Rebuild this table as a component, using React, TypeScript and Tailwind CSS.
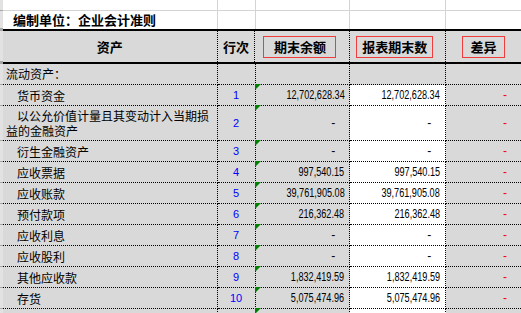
import React from 'react';

// 资产负债表 - 流动资产部分
interface AssetRow {
  label: string[];
  no: string;
  end: string;
  report: string;
}

const rows: AssetRow[] = [
  { label: ['货币资金'], no: '1', end: '12,702,628.34', report: '12,702,628.34' },
  { label: ['以公允价值计量且其变动计入当期损', '益的金融资产'], no: '2', end: '-', report: '-' },
  { label: ['衍生金融资产'], no: '3', end: '-', report: '-' },
  { label: ['应收票据'], no: '4', end: '997,540.15', report: '997,540.15' },
  { label: ['应收账款'], no: '5', end: '39,761,905.08', report: '39,761,905.08' },
  { label: ['预付款项'], no: '6', end: '216,362.48', report: '216,362.48' },
  { label: ['应收利息'], no: '7', end: '-', report: '-' },
  { label: ['应收股利'], no: '8', end: '-', report: '-' },
  { label: ['其他应收款'], no: '9', end: '1,832,419.59', report: '1,832,419.59' },
  { label: ['存货'], no: '10', end: '5,075,474.96', report: '5,075,474.96' },
  { label: [''], no: '', end: '', report: '' },
];

const dot = 'border-r border-b border-dotted border-black';
const grid = 'border-r border-[#d4d4d4]';
const num = "font-['Liberation_Sans',Arial,sans-serif] text-[12px]";

const Strip = ({ h }: { h: string }) => (
  <div className={`w-[3px] shrink-0 bg-[#e2e2e2] border-b border-[#a6a6a6] ${h}`} />
);

const Corner = () => (
  <svg className="absolute -top-px -left-px" width="6" height="6" viewBox="0 0 6 6">
    <polygon points="0,0 6,0 0,6" fill="#008000" />
  </svg>
);

function Value({ v, red }: { v: string; red?: boolean }) {
  if (!v) return null;
  if (v === '-') {
    return <span className={`${num} pr-[14px] ${red ? 'text-[#ff0000]' : 'text-black'}`}>-</span>;
  }
  return (
    <span className={`${num} inline-block mr-[5px] text-black scale-x-[0.76] origin-right whitespace-nowrap`}>{v}</span>
  );
}

export default function App() {
  return (
    <div className="w-[521px] h-[313px] overflow-hidden bg-white text-black font-['Noto_Sans_CJK_SC','Noto_Sans',sans-serif] text-[12px]">
      {/* 空白行 */}
      <div className="flex h-[11px]">
        <Strip h="h-[11px]" />
        <div className={`w-[215px] border-b border-[#d4d4d4] ${grid}`} />
        <div className={`w-[38px] border-b border-[#d4d4d4] ${grid}`} />
        <div className={`w-[95px] border-b border-[#d4d4d4] ${grid}`} />
        <div className={`w-[96px] border-b border-[#d4d4d4] ${grid}`} />
        <div className="w-[75px] border-b border-[#d4d4d4]" />
      </div>

      {/* 编制单位 */}
      <div className="flex h-[18px]">
        <Strip h="h-[18px]" />
        <div className={`w-[215px] flex items-center pl-[10px] font-bold text-[13px] leading-[18px] ${grid}`}>
          编制单位：企业会计准则
        </div>
        <div className={`w-[38px] ${grid}`} />
        <div className={`w-[95px] ${grid}`} />
        <div className={`w-[96px] ${grid}`} />
        <div className="w-[75px]" />
      </div>
      <div className="flex h-[2px]">
        <div className="w-[3px] bg-[#a6a6a6]" />
        <div className="flex-1 bg-black" />
      </div>

      {/* 表头 */}
      <div className="flex h-[31px] font-bold text-[13px] leading-[15px]">
        <Strip h="h-[31px]" />
        <div className="w-[215px] bg-[#d9d9d9] flex items-center justify-center border-r border-dotted border-black">资产</div>
        <div className="w-[38px] bg-[#d9d9d9] flex items-center justify-center border-r border-dotted border-black">行次</div>
        <div className="w-[95px] bg-[#d9d9d9] flex items-center pl-[8px] border-r border-dotted border-black">
          <div className="w-[73px] h-[22px] border border-[#f03c3c] flex items-center justify-center">期末余额</div>
        </div>
        <div className="w-[96px] bg-[#d9d9d9] flex items-center pl-[6px] border-r border-dotted border-black">
          <div className="w-[77px] h-[22px] border border-[#f03c3c] flex items-center justify-center">报表期末数</div>
        </div>
        <div className="w-[75px] bg-[#d9d9d9] flex items-center pl-[16px]">
          <div className="w-[43px] h-[22px] border border-[#f03c3c] flex items-center justify-center">差异</div>
        </div>
      </div>
      <div className="flex h-[2px]">
        <div className="w-[3px] bg-[#a6a6a6]" />
        <div className="flex-1 bg-black" />
      </div>

      {/* 流动资产 */}
      <div className="flex h-[21px] leading-[14px]">
        <Strip h="h-[21px]" />
        <div className={`w-[215px] bg-[#d9d9d9] flex items-center pl-[3px] ${dot}`}>流动资产：</div>
        <div className={`w-[38px] bg-[#d9d9d9] ${dot}`} />
        <div className={`w-[95px] bg-[#d9d9d9] ${dot}`} />
        <div className={`w-[96px] bg-[#d9d9d9] ${dot}`} />
        <div className="w-[75px] bg-[#d9d9d9] border-b border-dotted border-black" />
      </div>

      {rows.map((r, i) => {
        const h = r.label.length > 1 ? 'h-[35px]' : 'h-[21px]';
        return (
          <div key={i} className={`flex ${h} leading-[15px]`}>
            <Strip h={h} />
            <div className={`w-[215px] bg-[#d9d9d9] flex flex-col justify-center pl-[3px] ${dot}`}>
              {r.label.map((l, j) => (
                <span key={j} className={j === 0 ? 'pl-[11px]' : ''}>{l}</span>
              ))}
            </div>
            <div className={`w-[38px] bg-[#d9d9d9] flex items-center justify-center font-['Liberation_Sans',Arial,sans-serif] text-[11px] text-[#0000ff] ${dot}`}>
              {r.no}
            </div>
            <div className={`relative w-[95px] bg-[#d9d9d9] flex items-center justify-end ${dot}`}>
              <Corner />
              <Value v={r.end} />
            </div>
            <div className={`w-[96px] bg-white flex items-center justify-end ${dot}`}>
              <Value v={r.report} />
            </div>
            <div className="w-[75px] bg-[#d9d9d9] flex items-center justify-end border-b border-dotted border-black">
              {r.no && <Value v="-" red />}
            </div>
          </div>
        );
      })}
    </div>
  );
}
